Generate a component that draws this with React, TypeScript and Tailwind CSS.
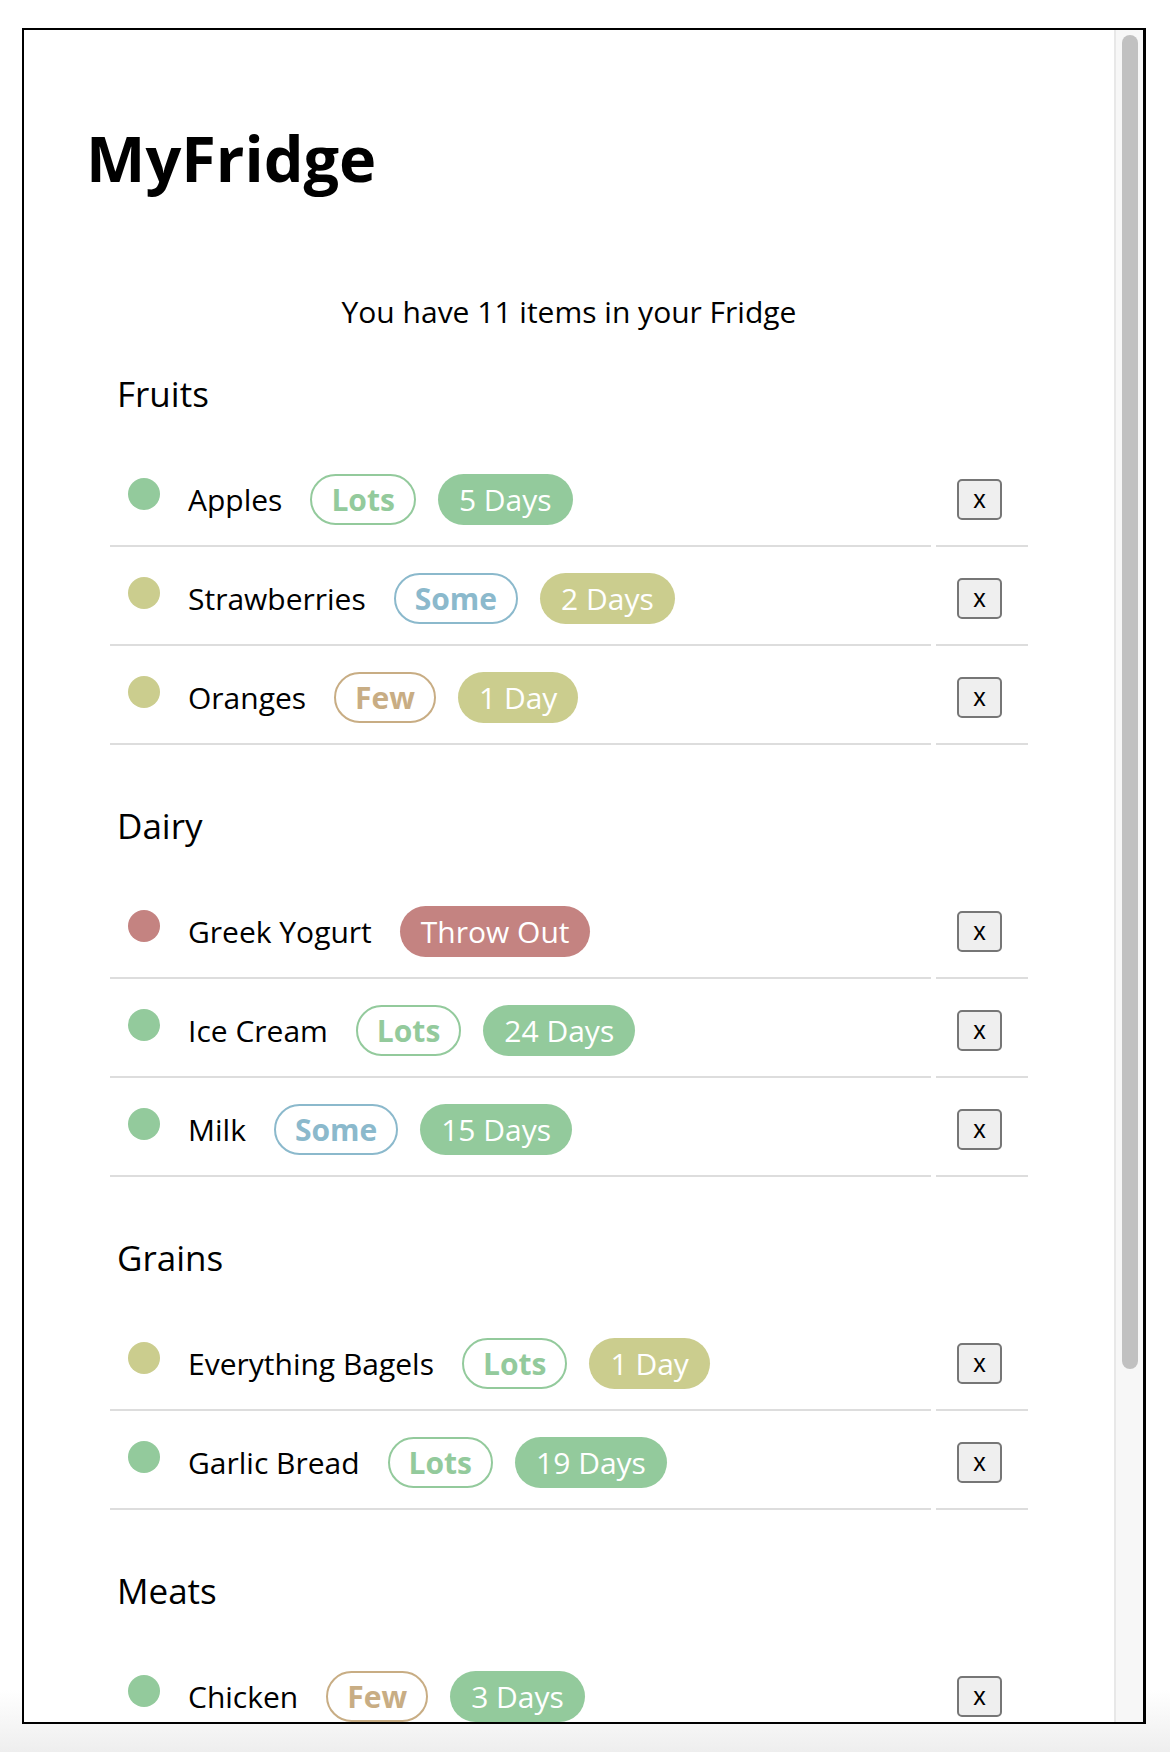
import React from 'react';

type Freshness = 'good' | 'soon' | 'bad';
type Amount = 'Lots' | 'Some' | 'Few';

type FridgeItem = {
  name: string;
  amount?: Amount;
  days: string;
  freshness: Freshness;
};

type Section = {
  title: string;
  items: FridgeItem[];
};

// only the visible part of the list; the fridge holds 11 in total
const ITEM_COUNT = 11;

const sections: Section[] = [
  {
    title: 'Fruits',
    items: [
      { name: 'Apples', amount: 'Lots', days: '5 Days', freshness: 'good' },
      { name: 'Strawberries', amount: 'Some', days: '2 Days', freshness: 'soon' },
      { name: 'Oranges', amount: 'Few', days: '1 Day', freshness: 'soon' },
    ],
  },
  {
    title: 'Dairy',
    items: [
      { name: 'Greek Yogurt', days: 'Throw Out', freshness: 'bad' },
      { name: 'Ice Cream', amount: 'Lots', days: '24 Days', freshness: 'good' },
      { name: 'Milk', amount: 'Some', days: '15 Days', freshness: 'good' },
    ],
  },
  {
    title: 'Grains',
    items: [
      { name: 'Everything Bagels', amount: 'Lots', days: '1 Day', freshness: 'soon' },
      { name: 'Garlic Bread', amount: 'Lots', days: '19 Days', freshness: 'good' },
    ],
  },
  {
    title: 'Meats',
    items: [{ name: 'Chicken', amount: 'Few', days: '3 Days', freshness: 'good' }],
  },
];

const dotColor: Record<Freshness, string> = {
  good: 'bg-[#93ca9c]',
  soon: 'bg-[#cbcd8e]',
  bad: 'bg-[#c48381]',
};

const amountColor: Record<Amount, string> = {
  Lots: 'border-[#93ca9c] text-[#93ca9c]',
  Some: 'border-[#8bb9cc] text-[#8bb9cc]',
  Few: 'border-[#c8ad84] text-[#c8ad84]',
};

function ItemRow({ item }: { item: FridgeItem }) {
  return (
    <>
      <div className="flex h-[93px] items-center border-b-2 border-[#dddddd] pl-[18px]">
        <span className={`mb-[12px] h-[32px] w-[32px] shrink-0 rounded-full ${dotColor[item.freshness]}`} />
        <span className="ml-[28px] whitespace-nowrap text-[30px] leading-none text-black">
          {item.name}
        </span>
        {item.amount ? (
          <span
            className={`ml-[28px] flex h-[51px] items-center rounded-full border-2 px-[19px] text-[30px] font-bold leading-none ${amountColor[item.amount]}`}
          >
            {item.amount}
          </span>
        ) : null}
        <span
          className={`${item.amount ? 'ml-[22px]' : 'ml-[28px]'} flex h-[51px] items-center whitespace-nowrap rounded-full px-[21px] text-[30px] leading-none text-white ${dotColor[item.freshness]}`}
        >
          {item.days}
        </span>
      </div>
      <div className="flex h-[93px] items-center border-b-2 border-[#dddddd] pl-[21px]">
        <button
          type="button"
          className="flex h-[41px] w-[45px] items-center justify-center rounded-[5px] border-2 border-[#767676] bg-[#efefef] font-['Liberation_Sans',Arial,sans-serif] text-[25px] leading-none text-black"
        >
          x
        </button>
      </div>
    </>
  );
}

export default function App() {
  return (
    <div className="h-[1752px] w-[1170px] overflow-hidden bg-[linear-gradient(to_bottom,#ffffff_1690px,#eeeeee_1752px)] pl-[22px] pt-[28px] font-['Open_Sans','Liberation_Sans',sans-serif]">
      <div className="flex h-[1696px] w-[1124px] border-2 border-r-[3px] border-black bg-white">
        <main className="h-full flex-1 overflow-hidden pt-[90px]">
          <h1 className="pl-[62px] text-[63px] font-bold leading-[76px] text-black">MyFridge</h1>

          <p className="mt-[98px] text-center text-[30px] leading-[36px] text-black">
            You have {ITEM_COUNT} items in your Fridge
          </p>

          <div className="mx-auto mt-[44px] flex w-[918px] flex-col gap-[61px]">
            {sections.map((section) => (
              <section key={section.title}>
                <h2 className="pl-[7px] text-[35px] font-normal leading-[40px] text-black">
                  {section.title}
                </h2>
                <div className="mt-[40px] grid grid-cols-[821px_92px] gap-x-[5px] gap-y-[6px]">
                  {section.items.map((item) => (
                    <ItemRow key={item.name} item={item} />
                  ))}
                </div>
              </section>
            ))}
          </div>
        </main>

        <div className="flex h-full w-[29px] shrink-0 border-l-2 border-[#e8e8e8] bg-[#f7f7f7] pl-[6px] pr-[5px] pt-[5px]">
          <div className="h-[1334px] w-[16px] rounded-full bg-[#c1c1c1]" />
        </div>
      </div>
    </div>
  );
}
